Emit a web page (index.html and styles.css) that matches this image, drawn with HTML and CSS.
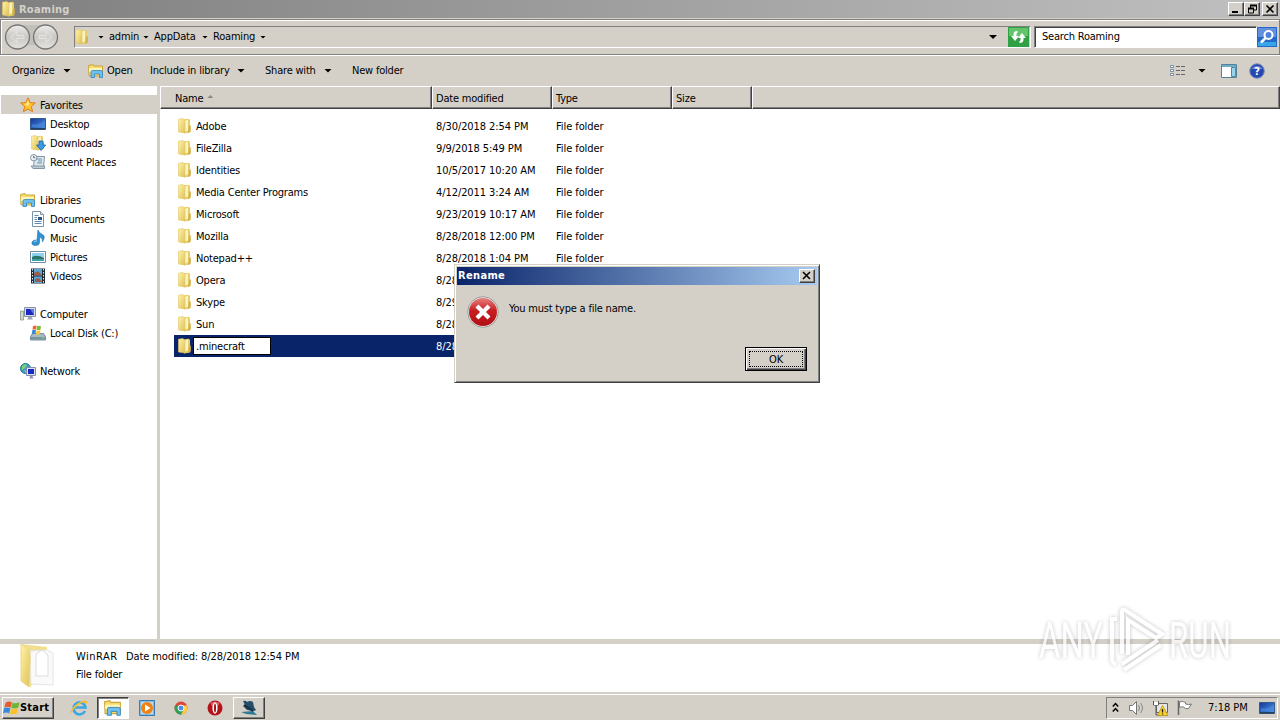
FILE: index.html
```html
<!DOCTYPE html>
<html>
<head>
  <meta charset="UTF-8">
  <title>Roaming</title>
  <link rel="stylesheet" href="styles.css">
</head>
<body>
<svg class="sprites">
  <defs>
    <linearGradient id="gold" x1="0" x2="1" y1="0" y2="1"><stop offset="0" stop-color="#fff3a8"/><stop offset="1" stop-color="#dfc157"/></linearGradient>
    <linearGradient id="blue" x1="0" x2="1" y1="0" y2="1"><stop offset="0" stop-color="#12349a"/><stop offset="1" stop-color="#4f9be6"/></linearGradient>
    <linearGradient id="red" x1="0" x2="0" y1="0" y2="1"><stop offset="0" stop-color="#e88080"/><stop offset=".45" stop-color="#c81e22"/><stop offset="1" stop-color="#b00f14"/></linearGradient>
    <linearGradient id="silver" x1="0" x2="0" y1="0" y2="1"><stop offset="0" stop-color="#efeeec"/><stop offset=".5" stop-color="#c9c7c3"/><stop offset="1" stop-color="#e6e4e0"/></linearGradient>
    <symbol id="folder" viewBox="0 0 16 16">
      <path d="M6 1.500l5.500-.8 1.500 1v12.800l-6 1z" fill="#e8cd68"/>
      <path d="M8 2.500l3-1v11l-3 1z" fill="#fbf3bd"/>
      <path d="M1.500 1.200l4.500-.7 2 2v12.500l-6.500-1z" fill="url(#gold)" stroke="#dfc66c" stroke-width=".6"/>
      <path d="M12 7.500h1.800v6L11 15z" fill="#d3b04a"/>
    </symbol>
    <symbol id="star" viewBox="0 0 16 16"><path d="M8 .8l2.100 4.800 5.200.4-4 3.500 1.300 5.200L8 12l-4.600 2.700 1.300-5.200-4-3.500 5.200-.4z" fill="#ffc52e" stroke="#e07a1b"/><path d="M8 3l1.200 3.600L8 9 4 7l2.600-.6z" fill="#ffe98c"/></symbol>
    <symbol id="desktop" viewBox="0 0 16 16"><path d="M.5 2.500h15v11H.5z" fill="url(#blue)" stroke="#345a8c"/><path d="M1 12h14v1.500H1z" fill="#26405f"/><path d="M2 8q6 2 13-4v7H2z" fill="#4b8bdc" opacity=".6"/></symbol>
    <symbol id="downloads" viewBox="0 0 16 16"><use href="#folder"/><path d="M9 6h4v4h2.700L11 15.500 6.500 10H9z" fill="#3b9be2" stroke="#1a64a6" stroke-width=".8"/></symbol>
    <symbol id="recent" viewBox="0 0 16 16"><path d="M4.500 2.500h10l-1 11H3.500z" fill="#dfe8ee" stroke="#8296a5"/><path d="M1 12h13.500v2.500H3z" fill="#bccad3" stroke="#8296a5"/><path d="M7 5h5M8 7h4M7 9h5" stroke="#6f91aa"/><circle cx="3.700" cy="3.700" r="3.200" fill="#eef3f6" stroke="#8296a5"/><path d="M3.700 1.800v2h1.500" fill="none" stroke="#567"/></symbol>
    <symbol id="libraries" viewBox="0 0 16 16"><path d="M.5 2.500L5 1.500l1 1.500h8.500v10H1z" fill="#f6dc6c" stroke="#caa63c"/><path d="M1 5h13v4H1z" fill="#fdf4b5"/><path d="M3 14.500V9q0-1.500 1.500-1.500h8.500q1.500 0 1.500 1.500v5.500h-3V11h-5v3.500z" fill="#6fc0ee" stroke="#3284bd" stroke-width=".8"/></symbol>
    <symbol id="documents" viewBox="0 0 16 16"><path d="M2.500.5h8l3 3v12h-11z" fill="#fff" stroke="#7b93a8"/><path d="M10.500.5v3h3" fill="#dde8f2" stroke="#7b93a8"/><path d="M4.500 4.500h4M4.500 6.500h2.500M4.500 8.500h2.500M4.500 10.500h7M4.500 12.500h7" stroke="#5e8ab5"/><path d="M8 6h4v3H8z" fill="#2b5581"/></symbol>
    <symbol id="music" viewBox="0 0 16 16"><path d="M8 0q1 3 4.500 4.500T12.500 12q.5-4-3-5v5.500q0 3-4 3T2 12.500t5-2.500z" fill="#2f93d4" stroke="#1b6fac" stroke-width=".6"/><path d="M4 12q1-1.500 3-1" stroke="#a7dcf7" fill="none"/></symbol>
    <symbol id="pictures" viewBox="0 0 16 16"><path d="M.5 2.500h15v11H.5z" fill="#fff" stroke="#708ba2"/><path d="M2 4h12v8H2z" fill="#8fd2ef"/><path d="M2 8q5-3 12 1v3H2z" fill="#2c7665"/><path d="M2 10h12v2H2z" fill="#3ba0a8"/></symbol>
    <symbol id="videos" viewBox="0 0 16 16"><path d="M1 .5h14v15H1z" fill="#222c33"/><path d="M4 1h8v6.500H4zM4 8.500h8V15H4z" fill="#59a8d7"/><path d="M4 5l4-2 4 4.500H4zM5 11l4-1 3 4H5z" fill="#9c5c48"/><path d="M2.500 1v14M13.500 1v14" stroke="#e5e9eb" stroke-dasharray="1.500 1.500"/></symbol>
    <symbol id="computer" viewBox="0 0 16 16"><path d="M.5 5h3v9h-3z" fill="#cfd6cb" stroke="#7e887e" stroke-width=".7"/><path d="M4.500 1.500h11v9h-11z" fill="#d7dde8" stroke="#8690a3"/><path d="M6 3h8v6H6z" fill="#1a28bd"/><path d="M10 3h4v6z" fill="#5d79ee"/><path d="M8.500 11h3l1.500 2.500H7z" fill="#9ca4b5"/></symbol>
    <symbol id="disk" viewBox="0 0 16 16"><path d="M2.500 8.500h11l2 3v3.500H.5v-3.500z" fill="#a8b9c2" stroke="#637985" stroke-width=".8"/><path d="M1 12h14v2.500H1z" fill="#7994a1"/><path d="M12 13h2" stroke="#5ce65c"/><path d="M3 1l3.500-.5L6 4.500H2.500z" fill="#f0642a"/><path d="M7 1h4l-.7 4H6.500z" fill="#79bc35"/><path d="M2.300 5H6l-.6 4H1.800z" fill="#3489dc"/><path d="M6.500 5.500h4L9.700 9.500H6z" fill="#fbc72b"/></symbol>
    <symbol id="network" viewBox="0 0 16 16"><circle cx="5.500" cy="5.500" r="5" fill="#3d9dc4" stroke="#277794"/><path d="M2 3q3-3 5-1L5 5 2 7zM4 7l4 1-2 2z" fill="#7bd07a"/><path d="M6.500 4.500h9v8h-9z" fill="#dbe0ee" stroke="#838eaa"/><path d="M8 6h6v5H8z" fill="#1829c4"/><path d="M10 13h2.500l1 2.500h-4z" fill="#8998b5"/></symbol>
    <symbol id="flag" viewBox="0 0 16 16"><path d="M2.500 2.500Q5.500.5 8.300 2L7.200 7Q4.500 5.500 1.300 7z" fill="#e9572c"/><path d="M8.800 2.500q3 1.200 6.800-.5L14.400 7q-3 1.500-6.700.5z" fill="#6fb436"/><path d="M1 7.700q3-1.500 5.900 0l-1.100 5Q3 11 0 12.700z" fill="#348bdc"/><path d="M7.500 8q3 1.200 6.700-.5l-1.100 5q-3 1.500-6.700.5z" fill="#fbc22b"/></symbol>
  </defs>
</svg>

<div class="window">
  <header class="titlebar">
    <svg class="icon"><use href="#folder"/></svg>
    <h1>Roaming</h1>
    <div class="winButtons">
      <span class="winButton"><svg width="12" height="10"><path d="M2 8h6" stroke="#000" stroke-width="2"/></svg></span>
      <span class="winButton"><svg width="12" height="10"><path d="M4.500 4V1.500h6V6H8" fill="none" stroke="#000"/><path d="M4 1.500h7M2 4.500h6" stroke="#000" stroke-width="2"/><path d="M2.500 4v5h5V4" fill="none" stroke="#000"/></svg></span>
      <span class="winButton close"><svg width="12" height="10"><path d="M2.500 1.500l7 7M9.500 1.500l-7 7" stroke="#000" stroke-width="1.600"/></svg></span>
    </div>
  </header>

  <div class="navbar">
    <svg class="arrows" viewBox="0 0 56 28">
      <path d="M14 2h28v20H14z" fill="#c3c0bb"/>
      <circle cx="13.500" cy="14" r="12" fill="url(#silver)" stroke="#777" stroke-width="1.300"/>
      <circle cx="41.500" cy="14" r="12" fill="url(#silver)" stroke="#777" stroke-width="1.300"/>
      <path d="M20 12.500h-7v-4L6.500 14l6.500 5.500v-4h7zM35 12.500h7v-4l6.500 5.500-6.500 5.500v-4h-7z" fill="#d3d1cd" stroke="#e6e5e2"/>
    </svg>
    <div class="address">
      <svg class="icon"><use href="#folder"/></svg>
      <i class="caret"></i><span class="crumb c1">admin</span>
      <i class="caret"></i><span class="crumb c2">AppData</span>
      <i class="caret"></i><span class="crumb c3">Roaming</span>
      <i class="caret"></i>
      <i class="caret big"></i>
    </div>
    <svg class="refresh" viewBox="0 0 21 20"><path d="M0 0h21v20H0z" fill="#2fa044"/><path d="M1 1h19v8H1z" fill="#64c46c"/><path d="M9 4Q5 4 5.500 9H3l4 5 4-5H8.500Q8 6 10 5zM12 16q4 0 3.500-5H18l-4-5-4 5h2.500q.5 3-1.500 4z" fill="#fff"/></svg>
    <div class="search">Search Roaming</div>
    <svg class="go" viewBox="0 0 20 20"><path d="M0 0h20v20H0z" fill="#2468cc"/><path d="M1 1h18v9H1z" fill="#638fdf"/><path d="M1 15h18v4H1z" fill="#37a5e8"/><circle cx="11.500" cy="8" r="4" fill="#4f83d9" stroke="#fff" stroke-width="2"/><path d="M8.500 11l-4.500 4.500" stroke="#fff" stroke-width="2.500"/></svg>
  </div>

  <div class="toolbar">
    <span class="t1">Organize</span><i class="caret big"></i>
    <svg class="icon open"><use href="#libraries"/></svg><span class="t2">Open</span>
    <span class="t3">Include in library</span><i class="caret big"></i>
    <span class="t4">Share with</span><i class="caret big"></i>
    <span class="t5">New folder</span>
    <div class="views">
      <svg width="16" height="12"><path d="M.5.500h3v2h-3zM.5 4.500h3v2h-3zM.5 8.500h3v2h-3z" fill="#fff" stroke="#7590a6"/><path d="M6 1.500h4M11 1.500h4M6 5.500h4M11 5.500h4M6 9.500h4M11 9.500h4" stroke="#666"/></svg>
      <i class="caret big"></i>
      <svg class="pane" width="16" height="14"><path d="M.5.500h15v13H.5z" fill="#fff" stroke="#54829c"/><path d="M1 1h14v2H1z" fill="#6faac8"/><path d="M10.500 3.500h4v9h-4z" fill="#9bd3ec" stroke="#55879f"/></svg>
      <svg class="help" width="16" height="16"><circle cx="8" cy="8" r="7.300" fill="#2448b0" stroke="#8291b7"/><path d="M2.500 6a6 5 0 0 1 11 0z" fill="#6c87d2"/><text x="8" y="12" text-anchor="middle">?</text></svg>
    </div>
  </div>

  <main class="content">
    <ul class="sidebar">
      <li class="group selected"><svg class="icon"><use href="#star"/></svg>Favorites</li>
      <li><svg class="icon"><use href="#desktop"/></svg>Desktop</li>
      <li><svg class="icon"><use href="#downloads"/></svg>Downloads</li>
      <li><svg class="icon"><use href="#recent"/></svg>Recent Places</li>
      <li class="group spaced"><svg class="icon"><use href="#libraries"/></svg>Libraries</li>
      <li><svg class="icon"><use href="#documents"/></svg>Documents</li>
      <li><svg class="icon"><use href="#music"/></svg>Music</li>
      <li><svg class="icon"><use href="#pictures"/></svg>Pictures</li>
      <li><svg class="icon"><use href="#videos"/></svg>Videos</li>
      <li class="group spaced"><svg class="icon"><use href="#computer"/></svg>Computer</li>
      <li><svg class="icon"><use href="#disk"/></svg>Local Disk (C:)</li>
      <li class="group spaced"><svg class="icon"><use href="#network"/></svg>Network</li>
    </ul>
    <section class="files">
      <div class="columns">
        <span class="name">Name <i class="sort"></i></span><span>Date modified</span><span>Type</span><span class="size">Size</span><span class="rest"></span>
      </div>
      <ul class="rows">
        <li><svg class="icon"><use href="#folder"/></svg><b>Adobe</b><span>8/30/2018 2:54 PM</span><span>File folder</span></li>
        <li><svg class="icon"><use href="#folder"/></svg><b>FileZilla</b><span>9/9/2018 5:49 PM</span><span>File folder</span></li>
        <li><svg class="icon"><use href="#folder"/></svg><b>Identities</b><span>10/5/2017 10:20 AM</span><span>File folder</span></li>
        <li><svg class="icon"><use href="#folder"/></svg><b>Media Center Programs</b><span>4/12/2011 3:24 AM</span><span>File folder</span></li>
        <li><svg class="icon"><use href="#folder"/></svg><b>Microsoft</b><span>9/23/2019 10:17 AM</span><span>File folder</span></li>
        <li><svg class="icon"><use href="#folder"/></svg><b>Mozilla</b><span>8/28/2018 12:00 PM</span><span>File folder</span></li>
        <li><svg class="icon"><use href="#folder"/></svg><b>Notepad++</b><span>8/28/2018 1:04 PM</span><span>File folder</span></li>
        <li><svg class="icon"><use href="#folder"/></svg><b>Opera</b><span>8/28</span></li>
        <li><svg class="icon"><use href="#folder"/></svg><b>Skype</b><span>8/29</span></li>
        <li><svg class="icon"><use href="#folder"/></svg><b>Sun</b><span>8/28</span></li>
        <li class="selected"><svg class="icon"><use href="#folder"/></svg><b><em>.minecraft</em></b><span>8/28</span></li>
      </ul>
    </section>
  </main>

  <div class="details">
    <svg width="36" height="46" viewBox="0 0 36 46">
      <path d="M1 0l26 3v10L10 44z" fill="#f1df8d"/>
      <path d="M10 7l17-1 6 3v32l-22-1z" fill="#fafafa" stroke="#e6e6e6"/>
      <path d="M16 10l6-4 6 5v21H16z" fill="#fff" stroke="#d9dde1"/>
      <path d="M1 0l8 5q1.500 3 1 14L9 43 1 37z" fill="url(#gold)" stroke="#ead78a"/>
    </svg>
    <div>
      <p><span class="file">WinRAR</span><span class="date">Date modified: 8/28/2018 12:54 PM</span></p>
      <p>File folder</p>
    </div>
  </div>

  <footer class="taskbar">
    <div class="start"><svg width="17" height="16"><use href="#flag" width="17" height="17"/></svg>Start</div>
    <svg class="task" viewBox="0 0 18 18"><path d="M15 12a6 6 0 1 1 .5-3.500H5" fill="none" stroke="#38a7e2" stroke-width="2.600"/><path d="M1 16Q-1 11 6 5.500T17 2q1 1-1 4 0-3-3-2.500T5 9t-4 7z" fill="#f4bd3b"/></svg>
    <span class="task active"><svg width="18" height="18"><use href="#libraries"/></svg></span>
    <svg class="task" viewBox="0 0 18 18"><path d="M1.500 1.500h15v15h-15z" fill="#80bce6" stroke="#3b7aae"/><path d="M3 3h12v12H3z" fill="#b8daf0"/><circle cx="9" cy="9" r="6" fill="#ee8014"/><path d="M7 5.500l5.500 3.500L7 12.500z" fill="#fff"/></svg>
    <svg class="task" viewBox="0 0 18 18"><circle cx="9" cy="9" r="6.500" fill="#dc4437"/><path d="M9 9L3.300 6A6.500 6.500 0 0 0 9 15.500L12 11z" fill="#2aa35a"/><path d="M9 15.500A6.500 6.500 0 0 0 15 6.500H9l3 4z" fill="#fccd3e"/><circle cx="9" cy="9" r="3" fill="#4f8ceb" stroke="#fff"/></svg>
    <svg class="task" viewBox="0 0 18 18"><circle cx="9" cy="9" r="7.500" fill="#b31319"/><path d="M4 4q5-3 10 0l-2 3H6z" fill="#d8565a"/><ellipse cx="9" cy="9" rx="2.600" ry="5.800" fill="#fff"/><ellipse cx="9" cy="9" rx="1" ry="4.600" fill="#a51217"/></svg>
    <span class="task app"><svg width="18" height="18"><path d="M3 2q3-1 4 1 3-2 6 0l1 5 2 3-2 1-7-1-4-4 2-1z" fill="#254f68"/><path d="M1 13l12-1 4 4-11-1z" fill="#2e7c91"/><path d="M4 6l9 6" stroke="#172f3f" stroke-width="2"/></svg></span>
    <div class="tray">
      <svg class="chevrons" width="7" height="11"><path d="M.8 4.500l2.700-3 2.700 3M.8 9.500l2.700-3 2.700 3" fill="none" stroke="#000" stroke-width="1.500"/></svg>
      <svg width="17" height="16"><path d="M1.500 5.500h3l4-4v13l-4-4h-3z" fill="#fff" stroke="#777"/><path d="M10.500 5q2 3 0 6M12.500 3q4 5 0 10" fill="none" stroke="#888"/></svg>
      <svg width="17" height="16"><path d="M4.500 3.500h11v9h-11z" fill="#e6e6e6" stroke="#666"/><path d="M1.500 1v4h5V1M4 5v10h4" fill="none" stroke="#555"/><path d="M2 2h4v3H2z" fill="#fff"/><path d="M10.500 5.500l5.500 10H5.500z" fill="#f7d22b" stroke="#b38b0d" stroke-width=".7"/><path d="M10.500 9v3.500M10.500 13.500v1" stroke="#222" stroke-width="1.300"/></svg>
      <svg width="17" height="16"><path d="M2.500 15v-14.500" stroke="#666" stroke-width="1.500"/><path d="M3.500 2q3-1.500 6 .5v1.500q3 1 6 0l-3 4.500q-3 1-5-1.500-2-.5-4 .5z" fill="#fff" stroke="#777"/></svg>
      <span class="clock">7:18 PM</span>
      <svg class="show" width="16" height="16"><use href="#desktop"/></svg>
    </div>
  </footer>
</div>

<div class="dialog">
  <div class="dialogTitle">Rename<span class="winButton"><svg width="12" height="10"><path d="M2 1l7 7M9 1L2 8" stroke="#000" stroke-width="1.600"/></svg></span></div>
  <div class="message">
    <svg width="32" height="32"><circle cx="16" cy="16" r="15.300" fill="#eee" stroke="#999"/><circle cx="16" cy="16" r="14" fill="url(#red)"/><path d="M10 10l12 12M22 10L10 22" stroke="#fff" stroke-width="4.200"/></svg>
    <p>You must type a file name.</p>
  </div>
  <button><span>OK</span></button>
</div>

<svg class="watermark" viewBox="0 0 220 80">
  <text x="5" y="56" textLength="64" lengthAdjust="spacingAndGlyphs">ANY</text>
  <text x="135" y="56" textLength="62" lengthAdjust="spacingAndGlyphs">RUN</text>
  <path d="M83 17h-5v40q0 4 4 5M88 52V9q0-2 3-1l37 24-6 4-28-18v35M124 38L88 62M127 43L90 68"/>
</svg>
</body>
</html>
```
FILE: styles.css
```css
* {
  box-sizing: border-box;
}
body {
  margin: 0;
  font: 11px/14px "DejaVu Sans Condensed", "DejaVu Sans", sans-serif;
  font-stretch: condensed;
  letter-spacing: -.2px;
  color: #000;
  background: #d4d0c8;
  overflow: hidden;
}
ul, p, h1 {
  margin: 0;
  padding: 0;
  list-style: none;
}
svg {
  display: block;
  flex: none;
}
.sprites {
  position: absolute;
  width: 0;
  height: 0;
}
.icon {
  width: 16px;
  height: 16px;
}
.window {
  display: flex;
  flex-direction: column;
  width: 1280px;
  height: 720px;
}
.titlebar {
  display: flex;
  align-items: center;
  height: 18px;
  padding: 0 2px 0 1px;
  background: linear-gradient(90deg, #808080, #c0c0c0);
}
.titlebar h1 {
  flex: 1;
  margin-left: 2px;
  padding-top: 1px;
  font-size: 11px;
  letter-spacing: .25px;
  color: #d4d0c8;
}
.winButtons {
  display: flex;
}
.winButton {
  display: flex;
  width: 16px;
  height: 14px;
  padding: 1px;
  background: #d4d0c8;
  border: 1px solid;
  border-color: #fff #404040 #404040 #fff;
  box-shadow: inset -1px -1px #808080;
}
.winButton.close {
  margin-left: 2px;
}
.navbar {
  display: flex;
  align-items: center;
  height: 36px;
  margin-top: 1px;
  padding: 0 1px 0 3px;
  border: 1px solid #808080;
  box-shadow: inset 1px 1px #fff, 0 1px #fff;
}
.arrows {
  width: 56px;
  height: 28px;
}
.address {
  display: flex;
  align-items: center;
  width: 957px;
  height: 22px;
  margin-left: 14px;
  border: 1px solid;
  border-color: #808080 #fff #fff #808080;
}
.address .icon {
  margin: 0 8px 0 -1px;
}
.caret {
  width: 6px;
  height: 3px;
  background: #000;
  clip-path: polygon(0 0, 100% 0, 50% 100%);
}
.caret.big {
  width: 8px;
  height: 4px;
}
.crumb {
  margin-left: 5px;
}
.c1 { width: 34px; }
.c2 { width: 48px; }
.c3 { width: 47px; }
.address .big {
  margin-left: auto;
  margin-right: 33px;
}
.refresh {
  width: 21px;
  height: 20px;
  margin-left: -23px;
}
.search {
  width: 223px;
  height: 22px;
  margin-left: 5px;
  padding: 3px 7px;
  background: #fff;
  border: 1px solid;
  border-color: #808080 #fff #fff #808080;
  box-shadow: inset 1px 1px #404040;
}
.go {
  width: 20px;
  height: 20px;
}
.toolbar {
  display: flex;
  align-items: center;
  height: 31px;
  padding-left: 12px;
}
.t1 { width: 51px; }
.open { margin: 0 3px 0 17px; }
.t2 { width: 43px; }
.t3 { width: 87px; }
.t4 { width: 59px; margin-left: 20px; }
.t5 { margin-left: 20px; }
.views {
  display: flex;
  align-items: center;
  margin-left: auto;
  margin-right: 15px;
}
.views .caret {
  margin: 0 15px 0 12px;
}
.help {
  margin-left: 12px;
}
.help text {
  font-size: 11px;
  font-weight: bold;
  fill: #fff;
}
.content {
  display: flex;
  height: 553px;
  background: #fff;
}
.sidebar {
  width: 160px;
  padding-top: 9px;
  border-right: 3px solid #d4d0c8;
}
.sidebar li {
  display: flex;
  align-items: center;
  gap: 4px;
  height: 19px;
  padding: 2px 0 0 30px;
}
.sidebar .icon,
.rows .icon {
  margin-top: -2px;
}
.sidebar .group {
  padding-left: 20px;
}
.sidebar .spaced {
  margin-top: 19px;
}
.sidebar .selected {
  margin-left: 1px;
  padding-left: 19px;
  background: #d4d0c8;
}
.files {
  flex: 1;
}
.columns {
  display: flex;
  height: 23px;
  background: #d4d0c8;
}
.columns span {
  width: 120px;
  padding: 5px 3px 0;
  border: 1px solid;
  border-color: #fff #404040 #404040 #fff;
  box-shadow: inset -1px -1px #808080;
}
.columns .name {
  width: 272px;
  padding-left: 14px;
}
.columns .size {
  width: 80px;
}
.columns .rest {
  flex: 1;
}
.sort {
  display: inline-block;
  width: 6px;
  height: 3px;
  margin: 0 0 4px 1px;
  background: #888;
  clip-path: polygon(50% 0, 100% 100%, 0 100%);
}
.rows {
  padding: 6px 0 0 14px;
}
.rows li {
  display: flex;
  align-items: center;
  height: 22px;
  padding: 2px 0 0 3px;
}
.rows b {
  width: 243px;
  padding-left: 3px;
  font-weight: normal;
}
.rows span {
  width: 120px;
  letter-spacing: -.08px;
}
.rows .selected {
  width: 400px;
  color: #fff;
  background: #0a246a;
}
.rows em {
  display: block;
  width: 78px;
  height: 18px;
  margin: -2px 0 0 -3px;
  padding: 2px 2px 0;
  font-style: normal;
  color: #000;
  background: #fff;
  border: 1px solid #000;
}
.details {
  display: flex;
  height: 54px;
  padding: 0 20px;
  background: #fff;
  border-top: 5px solid #d4d0c8;
}
.details div {
  margin: 6px 0 0 20px;
}
.details p {
  height: 18px;
}
.file {
  display: inline-block;
  width: 50px;
  letter-spacing: .5px;
}
.date {
  letter-spacing: -.1px;
}
.taskbar {
  display: flex;
  align-items: center;
  height: 27px;
  border-top: 1px solid #d4d0c8;
  box-shadow: 0 -1px #d4d0c8, inset 0 1px #fff;
}
.start {
  display: flex;
  align-items: center;
  width: 52px;
  height: 22px;
  margin: 1px 16px 0 2px;
  font-weight: bold;
  letter-spacing: .2px;
  border: 1px solid;
  border-color: #fff #404040 #404040 #fff;
  box-shadow: inset -1px -1px #808080;
}
.task {
  width: 18px;
  height: 18px;
  margin: 1px 8px 0 0;
}
.task.active, .task.app {
  display: flex;
  align-items: center;
  justify-content: center;
  width: 32px;
  height: 22px;
  border: 1px solid;
  border-color: #404040 #fff #fff #404040;
}
.task.active {
  margin-left: 1px;
  margin-right: 9px;
  background: #fff;
  box-shadow: inset 1px 1px #808080;
}
.task.app {
  margin-left: 1px;
  border-color: #fff #404040 #404040 #fff;
  box-shadow: inset -1px -1px #808080;
}
.task:nth-child(5),
.task:nth-child(6) {
  margin-left: 8px;
}
.tray {
  display: flex;
  align-items: center;
  width: 172px;
  height: 22px;
  margin: 1px 2px 0 auto;
  padding-left: 5px;
  gap: 7px;
  border: 1px solid;
  border-color: #808080 #fff #fff #808080;
}
.chevrons {
  margin-right: 2px;
}
.clock {
  width: 43px;
  margin-left: 8px;
  letter-spacing: 0;
}
.show {
  margin-left: 1px;
}

/* Message box */
.dialog {
  position: absolute;
  left: 454px;
  top: 264px;
  width: 366px;
  height: 119px;
  padding: 2px;
  background: #d4d0c8;
  border: 1px solid;
  border-color: #d4d0c8 #404040 #404040 #d4d0c8;
  box-shadow: inset 1px 1px #fff, inset -1px -1px #808080;
}
.dialogTitle {
  display: flex;
  align-items: center;
  justify-content: space-between;
  height: 18px;
  padding: 0 2px 0 1px;
  font-weight: bold;
  letter-spacing: .35px;
  color: #fff;
  background: linear-gradient(90deg, #0a246a, #a6caf0);
}
.message {
  display: flex;
  gap: 10px;
  padding: 11px 0 0 10px;
}
.message p {
  margin-top: 6px;
}
.dialog button {
  display: block;
  width: 62px;
  height: 24px;
  margin: 19px 10px 0 auto;
  padding: 2px;
  font: inherit;
  letter-spacing: inherit;
  color: #000;
  background: #d4d0c8;
  border: 1px solid #000;
  box-shadow: inset 1px 1px #fff, inset -1px -1px #404040, inset -2px -2px #808080;
}
.dialog button span {
  display: block;
  width: 54px;
  height: 16px;
  margin: 1px;
  line-height: 15px;
  border: 1px dotted #000;
}

.watermark {
  position: absolute;
  left: 1034px;
  top: 602px;
  width: 220px;
  height: 80px;
  filter: drop-shadow(0 0 2px rgba(0, 0, 0, .3));
  opacity: .75;
}
.watermark text {
  font: 50px Roboto, sans-serif;
  letter-spacing: 0;
  fill: #fff;
}
.watermark path {
  fill: none;
  stroke: #fff;
  stroke-width: 4;
}
```
